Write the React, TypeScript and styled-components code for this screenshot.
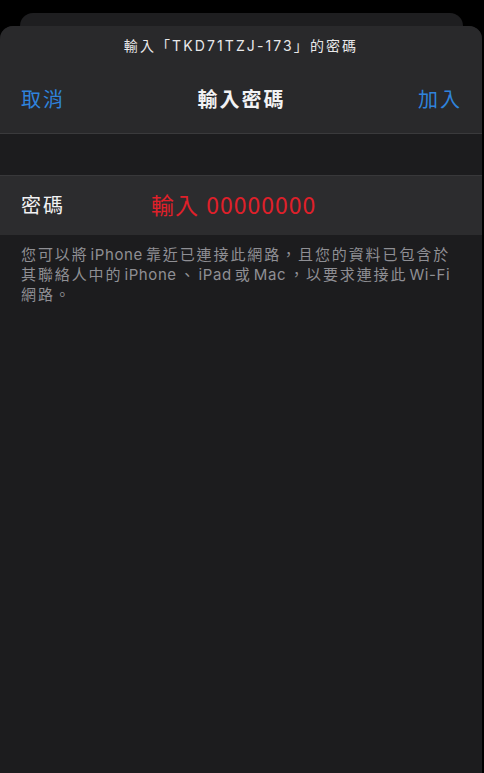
import React from "react";
import styled, { createGlobalStyle } from "styled-components";

const Global = createGlobalStyle`
  html, body { margin: 0; padding: 0; background: #000; }
  body { font-family: "Inter", "Noto Sans CJK TC", sans-serif; -webkit-font-smoothing: antialiased; }
  #root { width: 484px; height: 773px; }
`;

const Screen = styled.div`
  width: 484px;
  height: 773px;
  background: #000;
  display: flex;
  flex-direction: column;
  overflow: hidden;
  box-sizing: border-box;
  padding-top: 13px;
`;

const BackCard = styled.div`
  height: 13px;
  margin: 0 21px 0 20px;
  background: #1e1e20;
  border-radius: 14px 14px 0 0;
  flex-shrink: 0;
`;

const Sheet = styled.div`
  flex: 1;
  margin-right: 2px;
  background: #1c1c1e;
  border-radius: 13px 13px 0 0;
  display: flex;
  flex-direction: column;
  overflow: hidden;
`;

const Header = styled.div`
  background: #29292b;
  height: 107px;
  display: flex;
  flex-direction: column;
  border-bottom: 1px solid #3a3a3c;
`;

const Prompt = styled.div`
  text-align: center;
  color: #e8e8ea;
  font-size: 14px;
  letter-spacing: 2.1px;
  line-height: 20px;
  margin-top: 10px;
`;

const NavBar = styled.div`
  display: flex;
  align-items: center;
  justify-content: space-between;
  padding: 0 22px 0 21px;
  margin-top: 29px;
  height: 30px;
`;

const NavButton = styled.span<{ $right?: boolean }>`
  color: #2f83dc;
  font-size: 20px;
  letter-spacing: 2px;
  line-height: 30px;
  width: 70px;
  text-align: ${(p) => (p.$right ? "right" : "left")};
  margin-right: ${(p) => (p.$right ? "-2px" : "0")};
`;

const Title = styled.span`
  color: #f2f2f4;
  font-size: 20px;
  letter-spacing: 2px;
  font-weight: 700;
  line-height: 30px;
`;

const Gap = styled.div`
  height: 41px;
`;

const Row = styled.div`
  height: 60px;
  background: #2c2c2e;
  border-top: 1px solid #38383a;
  display: flex;
  align-items: center;
  padding-left: 21px;
  padding-bottom: 3px;
  box-sizing: border-box;
`;

const Label = styled.span`
  color: #f2f2f4;
  font-size: 20px;
  letter-spacing: 2px;
  width: 130px;
`;

const Placeholder = styled.span`
  color: #e0202a;
  font-size: 23px;
  font-family: "Noto Sans CJK TC", "Noto Sans", sans-serif;
  letter-spacing: 1px;
  word-spacing: 1px;
`;

const Footer = styled.p`
  margin: 10px 0 0 21px;
  color: #8f8f94;
  font-size: 15px;
  line-height: 20px;
  letter-spacing: 1.9px;
`;

const Line = styled.span`
  display: block;
  white-space: nowrap;
`;

const Latin = styled.span`
  letter-spacing: 0.6px;
  margin: 0 3px 0 2px;
`;

export default function App() {
  return (
    <>
      <Global />
      <Screen>
        <BackCard />
        <Sheet>
          <Header>
            <Prompt>輸入「TKD71TZJ-173」的密碼</Prompt>
            <NavBar>
              <NavButton>取消</NavButton>
              <Title>輸入密碼</Title>
              <NavButton $right>加入</NavButton>
            </NavBar>
          </Header>
          <Gap />
          <Row>
            <Label>密碼</Label>
            <Placeholder>輸入 00000000</Placeholder>
          </Row>
          <Footer>
            <Line>
              您可以將<Latin>iPhone</Latin>靠近已連接此網路，且您的資料已包含於
            </Line>
            <Line>
              其聯絡人中的<Latin>iPhone</Latin>、<Latin>iPad</Latin>或<Latin>Mac</Latin>，以要求連接此<Latin>Wi-Fi</Latin>
            </Line>
            <Line>網路。</Line>
          </Footer>
        </Sheet>
      </Screen>
    </>
  );
}
